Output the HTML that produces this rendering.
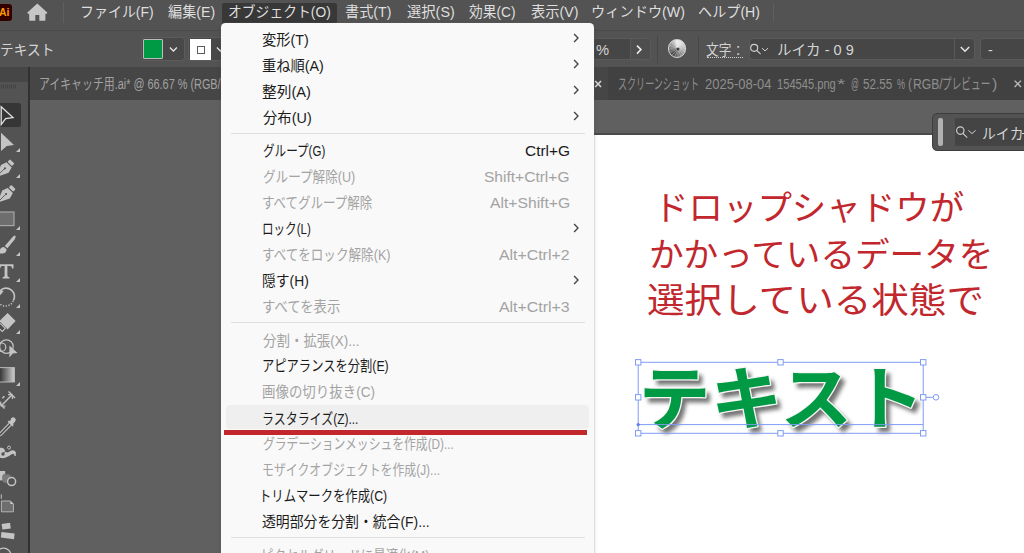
<!DOCTYPE html>
<html lang="ja"><head><meta charset="utf-8"><title>Illustrator</title>
<style>

html,body{margin:0;padding:0}
body{width:1024px;height:553px;overflow:hidden;background:#535353;font-family:"Liberation Sans","Noto Sans CJK JP",sans-serif}
#app{position:relative;width:1024px;height:553px;overflow:hidden;background:#535353}
#app div,#app svg{position:absolute}
.t{overflow:visible;white-space:nowrap}
.t svg{left:0;top:0;overflow:visible}
.t text,.rt{font-family:"Liberation Sans","Noto Sans CJK JP",sans-serif}
#menubar{left:0;top:0;width:1024px;height:30px;background:#535353}
#mbline{left:0;top:29.5px;width:1024px;height:2px;background:#4a4a4a}
#ctrl{left:0;top:31px;width:1024px;height:37px;background:#535353}
#tabs{left:30px;top:67px;width:994px;height:32.7px;background:#414141}
#tab1{left:0;top:0;width:578px;height:32.7px;background:#464646}
#tools{left:0;top:67px;width:28px;height:486px;background:#535353}
#toolsep{left:28px;top:67px;width:1.8px;height:486px;background:#313131}
#paste{left:29.8px;top:99.7px;width:995px;height:454px;background:#606060}
#art{left:590px;top:135px;width:434px;height:418px;background:#fff}
#artline{left:590px;top:133px;width:434px;height:2px;background:#4a4a4a}
#menu{left:221.2px;top:22.9px;width:372.6px;height:540px;background:#f9f9f9;border-radius:4.5px;box-shadow:0 0 0 .8px rgba(120,120,120,.2),0 1px 5px rgba(0,0,0,.14)}
.sep{left:10px;width:354px;height:1px;background:#e0e0e0}
#hover{left:4.6px;top:382.2px;width:362.8px;height:24px;background:#efefef;border-radius:4px}
#redline{left:3px;top:406.7px;width:362.5px;height:5px;background:#c1272d}

</style></head><body>
<div id="app">
<div id="menubar"></div><div id="mbline"></div><div id="ctrl"></div>
<div id="tabs"><div id="tab1"></div></div>
<div id="tools"></div><div id="toolsep"></div>
<div id="paste"></div><div id="artline"></div><div id="art"></div>
<div style="left:222px;top:3px;width:115px;height:21px;background:#383838;border-radius:2px"></div>
<div class="t" style="left:79.5px;top:2.5px;width:73.7px;height:18.1px;font-size:13.1px"><svg width="73.7" height="18.1" viewBox="0 0 73.7 18.1" fill="#dedede"><text x="0" y="13.77" font-size="14.5" textLength="73.7" lengthAdjust="spacingAndGlyphs">ファイル(F)</text></svg></div>
<div class="t" style="left:167.8px;top:2.5px;width:47.1px;height:18.1px;font-size:13.1px"><svg width="47.1" height="18.1" viewBox="0 0 47.1 18.1" fill="#dedede"><text x="0" y="13.77" font-size="14.5" textLength="47.1" lengthAdjust="spacingAndGlyphs">編集(E)</text></svg></div>
<div class="t" style="left:227.9px;top:2.5px;width:102.8px;height:18.1px;font-size:13.1px"><svg width="102.8" height="18.1" viewBox="0 0 102.8 18.1" fill="#dedede"><text x="0" y="13.77" font-size="14.5" textLength="102.8" lengthAdjust="spacingAndGlyphs">オブジェクト(O)</text></svg></div>
<div class="t" style="left:345.3px;top:2.5px;width:46.4px;height:18.1px;font-size:13.1px"><svg width="46.4" height="18.1" viewBox="0 0 46.4 18.1" fill="#dedede"><text x="0" y="13.77" font-size="14.5" textLength="46.4" lengthAdjust="spacingAndGlyphs">書式(T)</text></svg></div>
<div class="t" style="left:406.5px;top:2.5px;width:47.7px;height:18.1px;font-size:13.1px"><svg width="47.7" height="18.1" viewBox="0 0 47.7 18.1" fill="#dedede"><text x="0" y="13.77" font-size="14.5" textLength="47.7" lengthAdjust="spacingAndGlyphs">選択(S)</text></svg></div>
<div class="t" style="left:468.6px;top:2.5px;width:46.5px;height:18.1px;font-size:13.1px"><svg width="46.5" height="18.1" viewBox="0 0 46.5 18.1" fill="#dedede"><text x="0" y="13.77" font-size="14.5" textLength="46.5" lengthAdjust="spacingAndGlyphs">効果(C)</text></svg></div>
<div class="t" style="left:530.6px;top:2.5px;width:47.6px;height:18.1px;font-size:13.1px"><svg width="47.6" height="18.1" viewBox="0 0 47.6 18.1" fill="#dedede"><text x="0" y="13.77" font-size="14.5" textLength="47.6" lengthAdjust="spacingAndGlyphs">表示(V)</text></svg></div>
<div class="t" style="left:591.2px;top:2.5px;width:94.0px;height:18.1px;font-size:13.1px"><svg width="94.0" height="18.1" viewBox="0 0 94.0 18.1" fill="#dedede"><text x="0" y="13.77" font-size="14.5" textLength="94" lengthAdjust="spacingAndGlyphs">ウィンドウ(W)</text></svg></div>
<div class="t" style="left:698.2px;top:2.5px;width:62.0px;height:18.1px;font-size:13.1px"><svg width="62.0" height="18.1" viewBox="0 0 62.0 18.1" fill="#dedede"><text x="0" y="13.77" font-size="14.5" textLength="62" lengthAdjust="spacingAndGlyphs">ヘルプ(H)</text></svg></div>
<div style="left:30px;top:67px;width:191.5px;height:32.7px;overflow:hidden">
<div class="t" style="left:8.7px;top:7.6px;width:239.7px;height:18.8px;font-size:13.5px"><svg width="239.7" height="18.8" viewBox="0 0 239.7 18.8" fill="#a2a2a2"><text x="0" y="14.25" font-size="14.5" textLength="239.7" lengthAdjust="spacingAndGlyphs">アイキャッチ用.ai* @ 66.67 % (RGB/プレビュー)</text></svg></div>
</div>
<div class="t" style="left:618.0px;top:74.7px;width:81.0px;height:18.8px;font-size:13.5px"><svg width="81.0" height="18.8" viewBox="0 0 81.0 18.8" fill="#8e8e8e"><text x="0" y="14.25" font-size="15" textLength="81" lengthAdjust="spacingAndGlyphs">スクリーンショット</text></svg></div>
<div class="t" style="left:705.4px;top:74.7px;width:66.5px;height:18.8px;font-size:13.5px"><svg width="66.5" height="18.8" viewBox="0 0 66.5 18.8" fill="#8e8e8e"><text x="0" y="14.25" font-size="14" textLength="66.5" lengthAdjust="spacingAndGlyphs">2025-08-04</text></svg></div>
<div class="t" style="left:776.9px;top:74.7px;width:58.8px;height:18.8px;font-size:13.5px"><svg width="58.8" height="18.8" viewBox="0 0 58.8 18.8" fill="#8e8e8e"><text x="0" y="14.25" font-size="14" textLength="58.8" lengthAdjust="spacingAndGlyphs">154545.png</text></svg></div>
<div class="t" style="left:837.1px;top:74.7px;width:8.3px;height:18.8px;font-size:13.5px"><svg width="8.3" height="18.8" viewBox="0 0 8.3 18.8" fill="#8e8e8e"><text x="0" y="14.25" font-size="14" textLength="8.3" lengthAdjust="spacingAndGlyphs">*</text></svg></div>
<div class="t" style="left:851.2px;top:74.7px;width:7.9px;height:18.8px;font-size:13.5px"><svg width="7.9" height="18.8" viewBox="0 0 7.9 18.8" fill="#8e8e8e"><text x="0" y="14.25" font-size="14" textLength="7.9" lengthAdjust="spacingAndGlyphs">@</text></svg></div>
<div class="t" style="left:863.4px;top:74.7px;width:29.3px;height:18.8px;font-size:13.5px"><svg width="29.3" height="18.8" viewBox="0 0 29.3 18.8" fill="#8e8e8e"><text x="0" y="14.25" font-size="14" textLength="29.3" lengthAdjust="spacingAndGlyphs">52.55</text></svg></div>
<div class="t" style="left:897.4px;top:74.7px;width:8.1px;height:18.8px;font-size:13.5px"><svg width="8.1" height="18.8" viewBox="0 0 8.1 18.8" fill="#8e8e8e"><text x="0" y="14.25" font-size="14" textLength="8.1" lengthAdjust="spacingAndGlyphs">%</text></svg></div>
<div class="t" style="left:908.0px;top:74.7px;width:4.0px;height:18.8px;font-size:13.5px"><svg width="4.0" height="18.8" viewBox="0 0 4.0 18.8" fill="#8e8e8e"><text x="0" y="14.25" font-size="14" textLength="4" lengthAdjust="spacingAndGlyphs">(</text></svg></div>
<div class="t" style="left:913.1px;top:74.7px;width:29.7px;height:18.8px;font-size:13.5px"><svg width="29.7" height="18.8" viewBox="0 0 29.7 18.8" fill="#8e8e8e"><text x="0" y="14.25" font-size="14" textLength="29.7" lengthAdjust="spacingAndGlyphs">RGB/</text></svg></div>
<div class="t" style="left:942.0px;top:74.7px;width:48.3px;height:18.8px;font-size:13.5px"><svg width="48.3" height="18.8" viewBox="0 0 48.3 18.8" fill="#8e8e8e"><text x="0" y="14.25" font-size="15" textLength="48.3" lengthAdjust="spacingAndGlyphs">プレビュー</text></svg></div>
<div class="t" style="left:992.0px;top:74.7px;width:5.4px;height:18.8px;font-size:13.5px"><svg width="5.4" height="18.8" viewBox="0 0 5.4 18.8" fill="#8e8e8e"><text x="0" y="14.25" font-size="14" textLength="5.4" lengthAdjust="spacingAndGlyphs">)</text></svg></div>
<div class="t" style="left:653.7px;top:188.4px;width:310.2px;height:42.5px;font-size:30.6px"><svg width="310.2" height="42.5" viewBox="0 0 310.2 42.5" fill="#c1272d"><text x="0" y="32.3" font-size="34" textLength="310.2" lengthAdjust="spacingAndGlyphs">ドロップシャドウが</text></svg></div>
<div class="t" style="left:648.5px;top:234.9px;width:344.5px;height:42.5px;font-size:30.6px"><svg width="344.5" height="42.5" viewBox="0 0 344.5 42.5" fill="#c1272d"><text x="0" y="32.3" font-size="34" textLength="344.5" lengthAdjust="spacingAndGlyphs">かかっているデータを</text></svg></div>
<div class="t" style="left:647.2px;top:280.7px;width:337.0px;height:42.5px;font-size:30.6px"><svg width="337.0" height="42.5" viewBox="0 0 337.0 42.5" fill="#c1272d"><text x="0" y="32.3" font-size="35" textLength="337" lengthAdjust="spacingAndGlyphs">選択している状態で</text></svg></div>
<div style="left:-6px;top:4.3px;width:18px;height:16.4px;background:#330000;border-radius:3px"></div>
<div class="t" style="left:-1.3px;top:6.3px;width:10.5px;height:13.2px;font-size:9.5px"><svg width="10.5" height="13.2" viewBox="0 0 10.5 13.2" fill="#ff9a00"><text x="0" y="10.07" font-size="10.6" font-weight="bold" textLength="10.5" lengthAdjust="spacingAndGlyphs">Ai</text></svg></div>
<svg style="left:26px;top:2px" width="24" height="20" viewBox="26 2 24 20"><path fill="#c6c6c6" d="M37.3 3.4 L47.2 12.6 Q47.6 13.6 46.6 13.7 L45.4 13.7 L45.4 20 Q45.4 20.8 44.6 20.8 L39.3 20.8 L39.3 14.9 L35.3 14.9 L35.3 20.8 L30 20.8 Q29.2 20.8 29.2 20 L29.2 13.7 L28 13.7 Q27 13.6 27.4 12.6 Z"/></svg>
<div style="left:62.6px;top:1.5px;width:1.4px;height:21px;background:#5f5f5f"></div>
<div style="left:772.5px;top:2.5px;width:1.4px;height:19px;background:#5f5f5f"></div>
<div style="left:141.7px;top:38.3px;width:42.2px;height:21.8px;background:#484848;border-radius:3px;box-shadow:0 0 0 1px #5c5c5c"></div>
<div style="left:142.9px;top:39.1px;width:18px;height:18px;background:#009944;border:1px solid #bdbdbd;border-radius:1px"></div>
<svg style="left:167px;top:44px" width="14" height="10" viewBox="0 0 14 10" fill="none" stroke="#e6e6e6" stroke-width="1.3"><path d="M2.9 3.5 L6.4 7 L9.9 3.5"/></svg>
<div style="left:188.8px;top:38.3px;width:40px;height:21.8px;background:#484848;border-radius:3px;box-shadow:0 0 0 1px #5c5c5c"></div>
<div style="left:190px;top:38.8px;width:21.2px;height:20.8px;background:#fff"></div>
<div style="left:197.2px;top:46.2px;width:5.6px;height:5.4px;border:.9px solid #5c5c5c;background:#fff"></div>
<svg style="left:214px;top:44px" width="14" height="10" viewBox="0 0 14 10" fill="none" stroke="#e6e6e6" stroke-width="1.3"><path d="M2.9 3.5 L6.4 7 L9.9 3.5"/></svg>
<div style="left:560px;top:39px;width:89.6px;height:20.4px;background:#464646;border-radius:3px;box-shadow:0 0 0 1px #5a5a5a"></div>
<div style="left:629.6px;top:39px;width:20px;height:20.4px;background:#4e4e4e;border-radius:0 3px 3px 0;border-left:1px solid #5a5a5a;box-sizing:border-box"></div>
<svg style="left:634px;top:43px" width="10" height="13" viewBox="0 0 10 13" fill="none" stroke="#eee" stroke-width="1.5"><path d="M3 2.6 L7 6.6 L3 10.6"/></svg>
<div style="left:656.8px;top:36px;width:1px;height:27px;background:#474747"></div>
<div style="left:698.3px;top:36px;width:1px;height:27px;background:#474747"></div>
<div style="left:668.2px;top:39.4px;width:16.2px;height:16.2px;border-radius:50%;border:1.3px solid #d6d6d6;background:conic-gradient(#f2f2f2 0deg,#e0e0e0 40deg,#b8b8b8 90deg,#8c8c8c 140deg,#5c5c5c 185deg,#4a4a4a 225deg,#7a7a7a 270deg,#a8a8a8 315deg,#f2f2f2 360deg)"></div>
<svg style="left:667px;top:38px" width="22" height="22" viewBox="-11 -11 22 22"><g stroke="#dcdcdc" stroke-width=".55" opacity=".8"><path d="M0 -8.4V8.4M-8.4 0H8.4M-5.9 -5.9L5.9 5.9M-5.9 5.9L5.9 -5.9M-3.2 -7.8L3.2 7.8M3.2 -7.8L-3.2 7.8M-7.8 -3.2L7.8 3.2M-7.8 3.2L7.8 -3.2"/></g><circle r="1.5" fill="#3c3c3c"/></svg>
<div style="left:706.5px;top:56.6px;width:36px;height:0;border-top:1.2px dotted #cfcfcf"></div>
<div style="left:749.5px;top:39px;width:224.5px;height:20.4px;background:#464646;border-radius:3px;box-shadow:0 0 0 1px #5a5a5a"></div>
<div style="left:954px;top:39px;width:1px;height:20.4px;background:#5a5a5a"></div>
<svg style="left:750px;top:42px" width="26" height="16" viewBox="750 42 26 16" fill="none" stroke="#cfcfcf" stroke-width="1.15"><circle cx="754.2" cy="47.8" r="3.5"/><path d="M756.7 50.4 L760.6 54.2"/><path d="M762 48.2 L765 50.9 L768 48.2" stroke-width="1"/></svg>
<svg style="left:958px;top:44px" width="14" height="10" viewBox="0 0 14 10" fill="none" stroke="#e6e6e6" stroke-width="1.5"><path d="M2.8 3 L7 7.2 L11.2 3"/></svg>
<div style="left:981px;top:39px;width:60px;height:20.4px;background:#464646;border-radius:3px;box-shadow:0 0 0 1px #5a5a5a"></div>
<div class="t" style="left:-0.3px;top:40.7px;width:54.4px;height:18.1px;font-size:13.1px"><svg width="54.4" height="18.1" viewBox="0 0 54.4 18.1" fill="#d4d4d4"><text x="0" y="13.77" font-size="14.5" textLength="54.4" lengthAdjust="spacingAndGlyphs">テキスト</text></svg></div>
<div class="t" style="left:595.7px;top:40.7px;width:13.1px;height:18.1px;font-size:13.1px"><svg width="13.1" height="18.1" viewBox="0 0 13.1 18.1" fill="#d4d4d4"><text x="0" y="13.77" font-size="14.5" textLength="13.1" lengthAdjust="spacingAndGlyphs">%</text></svg></div>
<div class="t" style="left:706.0px;top:40.7px;width:25.4px;height:18.1px;font-size:13.1px"><svg width="25.4" height="18.1" viewBox="0 0 25.4 18.1" fill="#d4d4d4"><text x="0" y="13.77" font-size="14.5" textLength="25.4" lengthAdjust="spacingAndGlyphs">文字</text></svg></div>
<div class="t" style="left:736.0px;top:39.9px;width:4.3px;height:20.0px;font-size:14.4px"><svg width="4.3" height="20.0" viewBox="0 0 4.3 20.0" fill="#d4d4d4"><text x="0" y="15.2" font-size="16" textLength="4.3" lengthAdjust="spacingAndGlyphs">:</text></svg></div>
<div class="t" style="left:776.6px;top:40.7px;width:76.8px;height:18.1px;font-size:13.1px"><svg width="76.8" height="18.1" viewBox="0 0 76.8 18.1" fill="#d4d4d4"><text x="0" y="13.77" font-size="14.5" textLength="76.8" lengthAdjust="spacingAndGlyphs">ルイカ - 0 9</text></svg></div>
<div class="t" style="left:988.4px;top:40.7px;width:4.9px;height:18.1px;font-size:13.1px"><svg width="4.9" height="18.1" viewBox="0 0 4.9 18.1" fill="#d4d4d4"><text x="0" y="13.77" font-size="14.5" textLength="4.9" lengthAdjust="spacingAndGlyphs">-</text></svg></div>
<svg style="left:594px;top:79px" width="9" height="10" viewBox="0 0 9 10" stroke="#d6d6d6" stroke-width="1.6"><path d="M1.2 2 L7 8 M7 2 L1.2 8"/></svg>
<svg style="left:1013px;top:79px" width="10" height="10" viewBox="0 0 10 10" stroke="#bdbdbd" stroke-width="1.3"><path d="M1.6 1.6 L8 8 M8 1.6 L1.6 8"/></svg>
<div style="left:933px;top:113.5px;width:110px;height:36.6px;background:#535353;border-radius:4.5px;box-shadow:0 0 0 1px #3d3d3d"></div>
<div style="left:938.4px;top:117.5px;width:4.2px;height:28.6px;background:#b2b2b2;border-radius:2.1px"></div>
<div style="left:955px;top:118px;width:80px;height:28px;background:#444;border-radius:2px"></div>
<svg style="left:955px;top:124px" width="24" height="18" viewBox="955 124 24 18" fill="none" stroke="#cfcfcf" stroke-width="1.15"><circle cx="960.3" cy="130.6" r="3.7"/><path d="M962.9 133.4 L967.2 137.6"/><path d="M968.4 130.4 L972 133.6 L975.6 130.4" stroke-width="1"/></svg>
<div class="t" style="left:981.7px;top:124.7px;width:41.5px;height:18.1px;font-size:13.1px"><svg width="41.5" height="18.1" viewBox="0 0 41.5 18.1" fill="#d4d4d4"><text x="0" y="13.77" font-size="14.5" textLength="41.5" lengthAdjust="spacingAndGlyphs">ルイカ</text></svg></div>
<div style="left:1022.4px;top:132.6px;width:3px;height:1.3px;background:#d4d4d4"></div>
<div style="left:0;top:67px;width:27.8px;height:14.5px;background:#464646"></div>
<svg style="left:0;top:84px" width="18" height="6" viewBox="0 0 18 6" stroke="#434343" stroke-width="1.1"><path d="M1.5 .8v3.8M3.5 .8v3.8M5.5 .8v3.8M7.5 .8v3.8M9.5 .8v3.8M11.5 .8v3.8M13.5 .8v3.8M15.5 .8v3.8"/></svg>
<div style="left:-4px;top:103px;width:25px;height:23.8px;background:#363636;border-radius:2.5px"></div>
<svg style="left:0;top:0" width="28" height="553" viewBox="0 0 28 553"><defs><linearGradient id="grd" x1="0" x2="1"><stop offset="0" stop-color="#222"/><stop offset="1" stop-color="#cfcfcf"/></linearGradient></defs><path d="M1.2 106.8 L13 117.6 L5.6 118.6 L1.2 124.6 Z" fill="none" stroke="#e0e0e0" stroke-width="1.3" stroke-linejoin="miter"/><path d="M1 132.8 L14 145 L6.8 146 L1 151 Z" fill="#c4c4c4"/><path d="M20 148.0 v4 h-4 z" fill="#c4c4c4"/><g fill="#c4c4c4"><rect x="-3.1" y="-1.75" width="6.2" height="3.5" rx="0.9" transform="translate(11 162.7) rotate(45)"/><path d="M6.5 162.3 L11.7 167.5 L8.6 172.8 L-3 176.8 L-3.6 176.2 L1 165 Z"/><path d="M-3.2 176.4 L4.4 168.8" stroke="#535353" stroke-width=".9"/><circle cx="4.9" cy="168.4" r="1.05" fill="#535353"/></g><path d="M20 174.0 v4 h-4 z" fill="#c4c4c4"/><g fill="#c4c4c4" transform="translate(1.2 25.6)"><rect x="-3.1" y="-1.75" width="6.2" height="3.5" rx="0.9" transform="translate(11 162.7) rotate(45)"/><path d="M6.5 162.3 L11.7 167.5 L8.6 172.8 L-3 176.8 L-3.6 176.2 L1 165 Z"/><path d="M-3.2 176.4 L4.4 168.8" stroke="#535353" stroke-width=".9"/><circle cx="4.9" cy="168.4" r="1.05" fill="#535353"/></g><rect x="-2" y="212" width="16" height="13.6" fill="#6e6e6e" stroke="#a6a6a6" stroke-width="1.2"/><path d="M20 226.0 v4 h-4 z" fill="#c4c4c4"/><path d="M15 235.6 Q16.4 236.6 14.6 239.4 L7.4 248.2 L4.8 246 L12.4 237.2 Q14 235.4 15 235.6 Z M4 247 L6.6 249.2 Q6.6 252.6 3 253.4 Q0 254 -3 252.4 Q-0.4 251.6 0 249.6 Q0.8 246.8 4 247 Z" fill="#c4c4c4"/><path d="M20 252.0 v4 h-4 z" fill="#c4c4c4"/><path d="M-1 264.3 H13.5 V268.6 H12.1 Q11.9 266.2 10.4 266 H7.4 V275.8 Q7.5 277 9.4 277.2 V278.6 H2.6 V277.2 Q4.6 277 4.6 275.8 V266 H1.8 Q0.4 266.2 0.2 268.6 H-1 Z" fill="#c4c4c4"/><path d="M20 278.0 v4 h-4 z" fill="#c4c4c4"/><path d="M0.4 290.4 A8.3 8.3 0 0 1 13.4 300.4" fill="none" stroke="#c4c4c4" stroke-width="1.6"/><path d="M13.2 300.8 A8.3 8.3 0 0 1 -2 301.4" fill="none" stroke="#c4c4c4" stroke-width="1.5" stroke-dasharray="1.2 1.6"/><path d="M-1.4 289.4 L3.6 291 L0.4 295.2 Z" fill="#c4c4c4"/><path d="M20 304.0 v4 h-4 z" fill="#c4c4c4"/><path d="M7.6 313 L15.6 321 L7.6 329.4 L3.6 325.4 L-0.4 321 Z" fill="#c4c4c4"/><path d="M-0.6 322.6 L5.2 328.4 L2.2 331.4 L-3.6 325.6 Z" fill="#4c4c4c" stroke="#c4c4c4" stroke-width="1.1"/><path d="M20 330.0 v4 h-4 z" fill="#c4c4c4"/><circle cx="6.4" cy="346.6" r="6.8" fill="none" stroke="#c4c4c4" stroke-width="1.2"/><circle cx="1.6" cy="347.2" r="4.2" fill="none" stroke="#c4c4c4" stroke-width="1.2"/><path d="M9.4 345.6 L17.6 353 L12.8 353.6 L9.4 357.4 Z" fill="#c4c4c4"/><rect x="-2" y="367.6" width="16.4" height="14.4" fill="url(#grd)" stroke="#b8b8b8" stroke-width="1"/><path d="M20 382.0 v4 h-4 z" fill="#c4c4c4"/><g stroke="#c4c4c4" stroke-width="1.4" fill="none"><path d="M1.6 405.4 L11.8 395"/><path d="M8.6 391.6 L15 398"/><path d="M-1.6 402 L4.6 408.4"/><path d="M0.6 401.6 L1.2 406 L5.4 406.2" stroke-width="1.2"/><path d="M8 394.6 L12.2 394.8 L12.4 399" stroke-width="1.2"/><path d="M2.4 398.2 L4.4 396.2" stroke-width="1.6"/></g><path d="M11.2 418.2 a2.6 2.6 0 0 1 3.8 3.6 L13 424 L13.8 425 L12.4 426.4 L7.6 421.8 L9 420.4 L10 421.2 Z" fill="#c4c4c4"/><path d="M9 423.4 L-1 433.8 L-2 436 M11 425.4 L1 435.6 L-2 436" fill="none" stroke="#c4c4c4" stroke-width="1.1"/><path d="M-2 448.6 Q3.6 446 5 450.6 Q6 453.8 9.6 451.4 Q13.6 448.8 15.8 452 L15.8 456 L14.6 456 Q14.4 453 11.6 454.2 Q8.4 456.4 5.8 457.6 Q1.6 459 -2 456.8 Z" fill="#c4c4c4"/><circle cx="9" cy="447.6" r="1.5" fill="none" stroke="#c4c4c4" stroke-width="1"/><circle cx="3" cy="454" r="1.5" fill="#535353" stroke="#535353" stroke-width=".4"/><path d="M8 448.6 L3.6 453.2" stroke="#535353" stroke-width="1"/><rect x="-2" y="471" width="7.2" height="9.4" fill="#c4c4c4"/><rect x="2.6" y="474.2" width="8" height="8.6" rx="2.4" fill="#7b7b7b" stroke="#6a6a6a" stroke-width=".6"/><circle cx="11.6" cy="481.6" r="4" fill="#535353" stroke="#c4c4c4" stroke-width="1.5"/><path d="M1.3 494.4 V498.8" stroke="#c4c4c4" stroke-width="1"/><path d="M1.4 501 H10.4 L13.4 504 V511.8 H1.4 Z" fill="#6e6e6e" stroke="#b4b4b4" stroke-width="1"/><path d="M10.4 501 L13.4 504 H10.4 Z" fill="#d0d0d0"/><path d="M1.6 524 L10 522.8 L10.8 528.4 L2.4 529.6 Z" fill="#c4c4c4"/><path d="M1.4 532 L14.6 533.6 L14 539.2 L0.8 537.6 Z" fill="#c4c4c4"/><circle cx="3.4" cy="556" r="7.8" fill="none" stroke="#c4c4c4" stroke-width="1.3"/></svg>
<svg style="left:0;top:0" width="1024" height="553" viewBox="0 0 1024 553" aria-label="テキスト"><defs><filter id="ds" x="-10%" y="-20%" width="125%" height="150%"><feGaussianBlur stdDeviation="2.1"/></filter></defs><g transform="translate(4.4 4.6)" fill="#000" opacity=".55" filter="url(#ds)" stroke="#000" stroke-width="1"><text class="rt" x="638.4" y="423.96" font-size="69" font-weight="bold" textLength="286" lengthAdjust="spacingAndGlyphs">テキスト</text></g><g fill="#f6f6f6" stroke="#f6f6f6" stroke-width="2.6" stroke-linejoin="round"><text class="rt" x="638.4" y="423.96" font-size="69" font-weight="bold" textLength="286" lengthAdjust="spacingAndGlyphs">テキスト</text></g><g fill="#009944"><text class="rt" x="638.4" y="423.96" font-size="69" font-weight="bold" textLength="286" lengthAdjust="spacingAndGlyphs">テキスト</text></g></svg>
<svg style="left:0;top:0" width="1024" height="553" viewBox="0 0 1024 553"><rect x="638.2" y="362.3" width="285" height="71" fill="none" stroke="#7f9cf5" stroke-width="1"/><path d="M638.2 424.6 H923.2 M926 397.3 H933" stroke="#7f9cf5" stroke-width="1" fill="none"/><circle cx="638.2" cy="424.6" r="1.6" fill="#5b7de8"/><circle cx="936" cy="397.3" r="2.8" fill="#fff" stroke="#7f9cf5" stroke-width="1"/><rect x="635.5" y="359.6" width="5.4" height="5.4" fill="#fff" stroke="#7f9cf5" stroke-width="1"/><rect x="777.8" y="359.6" width="5.4" height="5.4" fill="#fff" stroke="#7f9cf5" stroke-width="1"/><rect x="920.5" y="359.6" width="5.4" height="5.4" fill="#fff" stroke="#7f9cf5" stroke-width="1"/><rect x="635.5" y="394.6" width="5.4" height="5.4" fill="#fff" stroke="#7f9cf5" stroke-width="1"/><rect x="920.5" y="394.6" width="5.4" height="5.4" fill="#fff" stroke="#7f9cf5" stroke-width="1"/><rect x="635.5" y="430.6" width="5.4" height="5.4" fill="#fff" stroke="#7f9cf5" stroke-width="1"/><rect x="777.8" y="430.6" width="5.4" height="5.4" fill="#fff" stroke="#7f9cf5" stroke-width="1"/><rect x="920.5" y="430.6" width="5.4" height="5.4" fill="#fff" stroke="#7f9cf5" stroke-width="1"/></svg>
<div id="menu">
<div id="hover"></div><div id="redline"></div>
<div class="sep" style="top:110.0px"></div>
<div class="sep" style="top:299.0px"></div>
<div class="sep" style="top:514.5px"></div>
<div class="t" style="left:41.1px;top:8.1px;width:46.8px;height:18.8px;font-size:13.5px"><svg width="46.8" height="18.8" viewBox="0 0 46.8 18.8" fill="#1b1b1b"><text x="0" y="14.25" font-size="15" textLength="46.8" lengthAdjust="spacingAndGlyphs">変形(T)</text></svg></div>
<svg style="left:352.0px;top:10.2px" width="8" height="10" viewBox="0 0 8 10" fill="none" stroke="#444" stroke-width="1.35"><path d="M1.1 1 L5 5 L1.1 9"/></svg>
<div class="t" style="left:41.0px;top:34.1px;width:61.9px;height:18.8px;font-size:13.5px"><svg width="61.9" height="18.8" viewBox="0 0 61.9 18.8" fill="#1b1b1b"><text x="0" y="14.25" font-size="15" textLength="61.9" lengthAdjust="spacingAndGlyphs">重ね順(A)</text></svg></div>
<svg style="left:352.0px;top:36.2px" width="8" height="10" viewBox="0 0 8 10" fill="none" stroke="#444" stroke-width="1.35"><path d="M1.1 1 L5 5 L1.1 9"/></svg>
<div class="t" style="left:41.2px;top:60.1px;width:49.0px;height:18.8px;font-size:13.5px"><svg width="49.0" height="18.8" viewBox="0 0 49.0 18.8" fill="#1b1b1b"><text x="0" y="14.25" font-size="15" textLength="49" lengthAdjust="spacingAndGlyphs">整列(A)</text></svg></div>
<svg style="left:352.0px;top:62.2px" width="8" height="10" viewBox="0 0 8 10" fill="none" stroke="#444" stroke-width="1.35"><path d="M1.1 1 L5 5 L1.1 9"/></svg>
<div class="t" style="left:41.5px;top:86.1px;width:48.7px;height:18.8px;font-size:13.5px"><svg width="48.7" height="18.8" viewBox="0 0 48.7 18.8" fill="#1b1b1b"><text x="0" y="14.25" font-size="15" textLength="48.7" lengthAdjust="spacingAndGlyphs">分布(U)</text></svg></div>
<svg style="left:352.0px;top:88.2px" width="8" height="10" viewBox="0 0 8 10" fill="none" stroke="#444" stroke-width="1.35"><path d="M1.1 1 L5 5 L1.1 9"/></svg>
<div class="t" style="left:41.6px;top:119.6px;width:62.3px;height:18.8px;font-size:13.5px"><svg width="62.3" height="18.8" viewBox="0 0 62.3 18.8" fill="#1b1b1b"><text x="0" y="14.25" font-size="15" textLength="62.3" lengthAdjust="spacingAndGlyphs">グループ(G)</text></svg></div>
<div class="t" style="left:303.8px;top:119.6px;width:45.1px;height:18.8px;font-size:13.5px"><svg width="45.1" height="18.8" viewBox="0 0 45.1 18.8" fill="#1b1b1b"><text x="0" y="14.25" font-size="15" textLength="45.1" lengthAdjust="spacingAndGlyphs">Ctrl+G</text></svg></div>
<div class="t" style="left:41.6px;top:145.6px;width:92.3px;height:18.8px;font-size:13.5px"><svg width="92.3" height="18.8" viewBox="0 0 92.3 18.8" fill="#a3a3a3"><text x="0" y="14.25" font-size="15" textLength="92.3" lengthAdjust="spacingAndGlyphs">グループ解除(U)</text></svg></div>
<div class="t" style="left:263.3px;top:145.6px;width:85.5px;height:18.8px;font-size:13.5px"><svg width="85.5" height="18.8" viewBox="0 0 85.5 18.8" fill="#a3a3a3"><text x="0" y="14.25" font-size="15" textLength="85.5" lengthAdjust="spacingAndGlyphs">Shift+Ctrl+G</text></svg></div>
<div class="t" style="left:40.9px;top:171.6px;width:110.3px;height:18.8px;font-size:13.5px"><svg width="110.3" height="18.8" viewBox="0 0 110.3 18.8" fill="#a3a3a3"><text x="0" y="14.25" font-size="15" textLength="110.3" lengthAdjust="spacingAndGlyphs">すべてグループ解除</text></svg></div>
<div class="t" style="left:268.6px;top:171.6px;width:80.2px;height:18.8px;font-size:13.5px"><svg width="80.2" height="18.8" viewBox="0 0 80.2 18.8" fill="#a3a3a3"><text x="0" y="14.25" font-size="15" textLength="80.2" lengthAdjust="spacingAndGlyphs">Alt+Shift+G</text></svg></div>
<div class="t" style="left:40.5px;top:197.6px;width:48.8px;height:18.8px;font-size:13.5px"><svg width="48.8" height="18.8" viewBox="0 0 48.8 18.8" fill="#1b1b1b"><text x="0" y="14.25" font-size="15" textLength="48.8" lengthAdjust="spacingAndGlyphs">ロック(L)</text></svg></div>
<svg style="left:352.0px;top:199.7px" width="8" height="10" viewBox="0 0 8 10" fill="none" stroke="#444" stroke-width="1.35"><path d="M1.1 1 L5 5 L1.1 9"/></svg>
<div class="t" style="left:40.9px;top:223.6px;width:128.5px;height:18.8px;font-size:13.5px"><svg width="128.5" height="18.8" viewBox="0 0 128.5 18.8" fill="#a3a3a3"><text x="0" y="14.25" font-size="15" textLength="128.5" lengthAdjust="spacingAndGlyphs">すべてをロック解除(K)</text></svg></div>
<div class="t" style="left:278.0px;top:223.6px;width:70.5px;height:18.8px;font-size:13.5px"><svg width="70.5" height="18.8" viewBox="0 0 70.5 18.8" fill="#a3a3a3"><text x="0" y="14.25" font-size="15" textLength="70.5" lengthAdjust="spacingAndGlyphs">Alt+Ctrl+2</text></svg></div>
<div class="t" style="left:40.6px;top:249.6px;width:46.8px;height:18.8px;font-size:13.5px"><svg width="46.8" height="18.8" viewBox="0 0 46.8 18.8" fill="#1b1b1b"><text x="0" y="14.25" font-size="15" textLength="46.8" lengthAdjust="spacingAndGlyphs">隠す(H)</text></svg></div>
<svg style="left:352.0px;top:251.7px" width="8" height="10" viewBox="0 0 8 10" fill="none" stroke="#444" stroke-width="1.35"><path d="M1.1 1 L5 5 L1.1 9"/></svg>
<div class="t" style="left:40.9px;top:275.6px;width:78.3px;height:18.8px;font-size:13.5px"><svg width="78.3" height="18.8" viewBox="0 0 78.3 18.8" fill="#a3a3a3"><text x="0" y="14.25" font-size="15" textLength="78.3" lengthAdjust="spacingAndGlyphs">すべてを表示</text></svg></div>
<div class="t" style="left:278.0px;top:275.6px;width:70.6px;height:18.8px;font-size:13.5px"><svg width="70.6" height="18.8" viewBox="0 0 70.6 18.8" fill="#a3a3a3"><text x="0" y="14.25" font-size="15" textLength="70.6" lengthAdjust="spacingAndGlyphs">Alt+Ctrl+3</text></svg></div>
<div class="t" style="left:41.5px;top:309.1px;width:96.5px;height:18.8px;font-size:13.5px"><svg width="96.5" height="18.8" viewBox="0 0 96.5 18.8" fill="#a3a3a3"><text x="0" y="14.25" font-size="15" textLength="96.5" lengthAdjust="spacingAndGlyphs">分割・拡張(X)...</text></svg></div>
<div class="t" style="left:40.7px;top:334.6px;width:126.7px;height:18.8px;font-size:13.5px"><svg width="126.7" height="18.8" viewBox="0 0 126.7 18.8" fill="#1b1b1b"><text x="0" y="14.25" font-size="15" textLength="126.7" lengthAdjust="spacingAndGlyphs">アピアランスを分割(E)</text></svg></div>
<div class="t" style="left:41.0px;top:360.6px;width:112.9px;height:18.8px;font-size:13.5px"><svg width="112.9" height="18.8" viewBox="0 0 112.9 18.8" fill="#a3a3a3"><text x="0" y="14.25" font-size="15" textLength="112.9" lengthAdjust="spacingAndGlyphs">画像の切り抜き(C)</text></svg></div>
<div class="t" style="left:40.5px;top:387.1px;width:96.4px;height:18.8px;font-size:13.5px"><svg width="96.4" height="18.8" viewBox="0 0 96.4 18.8" fill="#1b1b1b"><text x="0" y="14.25" font-size="15" textLength="96.4" lengthAdjust="spacingAndGlyphs">ラスタライズ(Z)...</text></svg></div>
<div class="t" style="left:41.6px;top:412.6px;width:190.9px;height:18.8px;font-size:13.5px"><svg width="190.9" height="18.8" viewBox="0 0 190.9 18.8" fill="#a3a3a3"><text x="0" y="14.25" font-size="15" textLength="190.9" lengthAdjust="spacingAndGlyphs">グラデーションメッシュを作成(D)...</text></svg></div>
<div class="t" style="left:40.9px;top:438.6px;width:178.0px;height:18.8px;font-size:13.5px"><svg width="178.0" height="18.8" viewBox="0 0 178.0 18.8" fill="#a3a3a3"><text x="0" y="14.25" font-size="15" textLength="178" lengthAdjust="spacingAndGlyphs">モザイクオブジェクトを作成(J)...</text></svg></div>
<div class="t" style="left:38.2px;top:464.6px;width:128.2px;height:18.8px;font-size:13.5px"><svg width="128.2" height="18.8" viewBox="0 0 128.2 18.8" fill="#1b1b1b"><text x="0" y="14.25" font-size="15" textLength="128.2" lengthAdjust="spacingAndGlyphs">トリムマークを作成(C)</text></svg></div>
<div class="t" style="left:41.3px;top:490.6px;width:167.7px;height:18.8px;font-size:13.5px"><svg width="167.7" height="18.8" viewBox="0 0 167.7 18.8" fill="#1b1b1b"><text x="0" y="14.25" font-size="15" textLength="167.7" lengthAdjust="spacingAndGlyphs">透明部分を分割・統合(F)...</text></svg></div>
<div class="t" style="left:40.0px;top:523.7px;width:168.4px;height:18.8px;font-size:13.5px"><svg width="168.4" height="18.8" viewBox="0 0 168.4 18.8" fill="#a3a3a3"><text x="0" y="14.25" font-size="15" textLength="168.4" lengthAdjust="spacingAndGlyphs">ピクセルグリッドに最適化(M)</text></svg></div>
</div>
</div>
</body></html>
